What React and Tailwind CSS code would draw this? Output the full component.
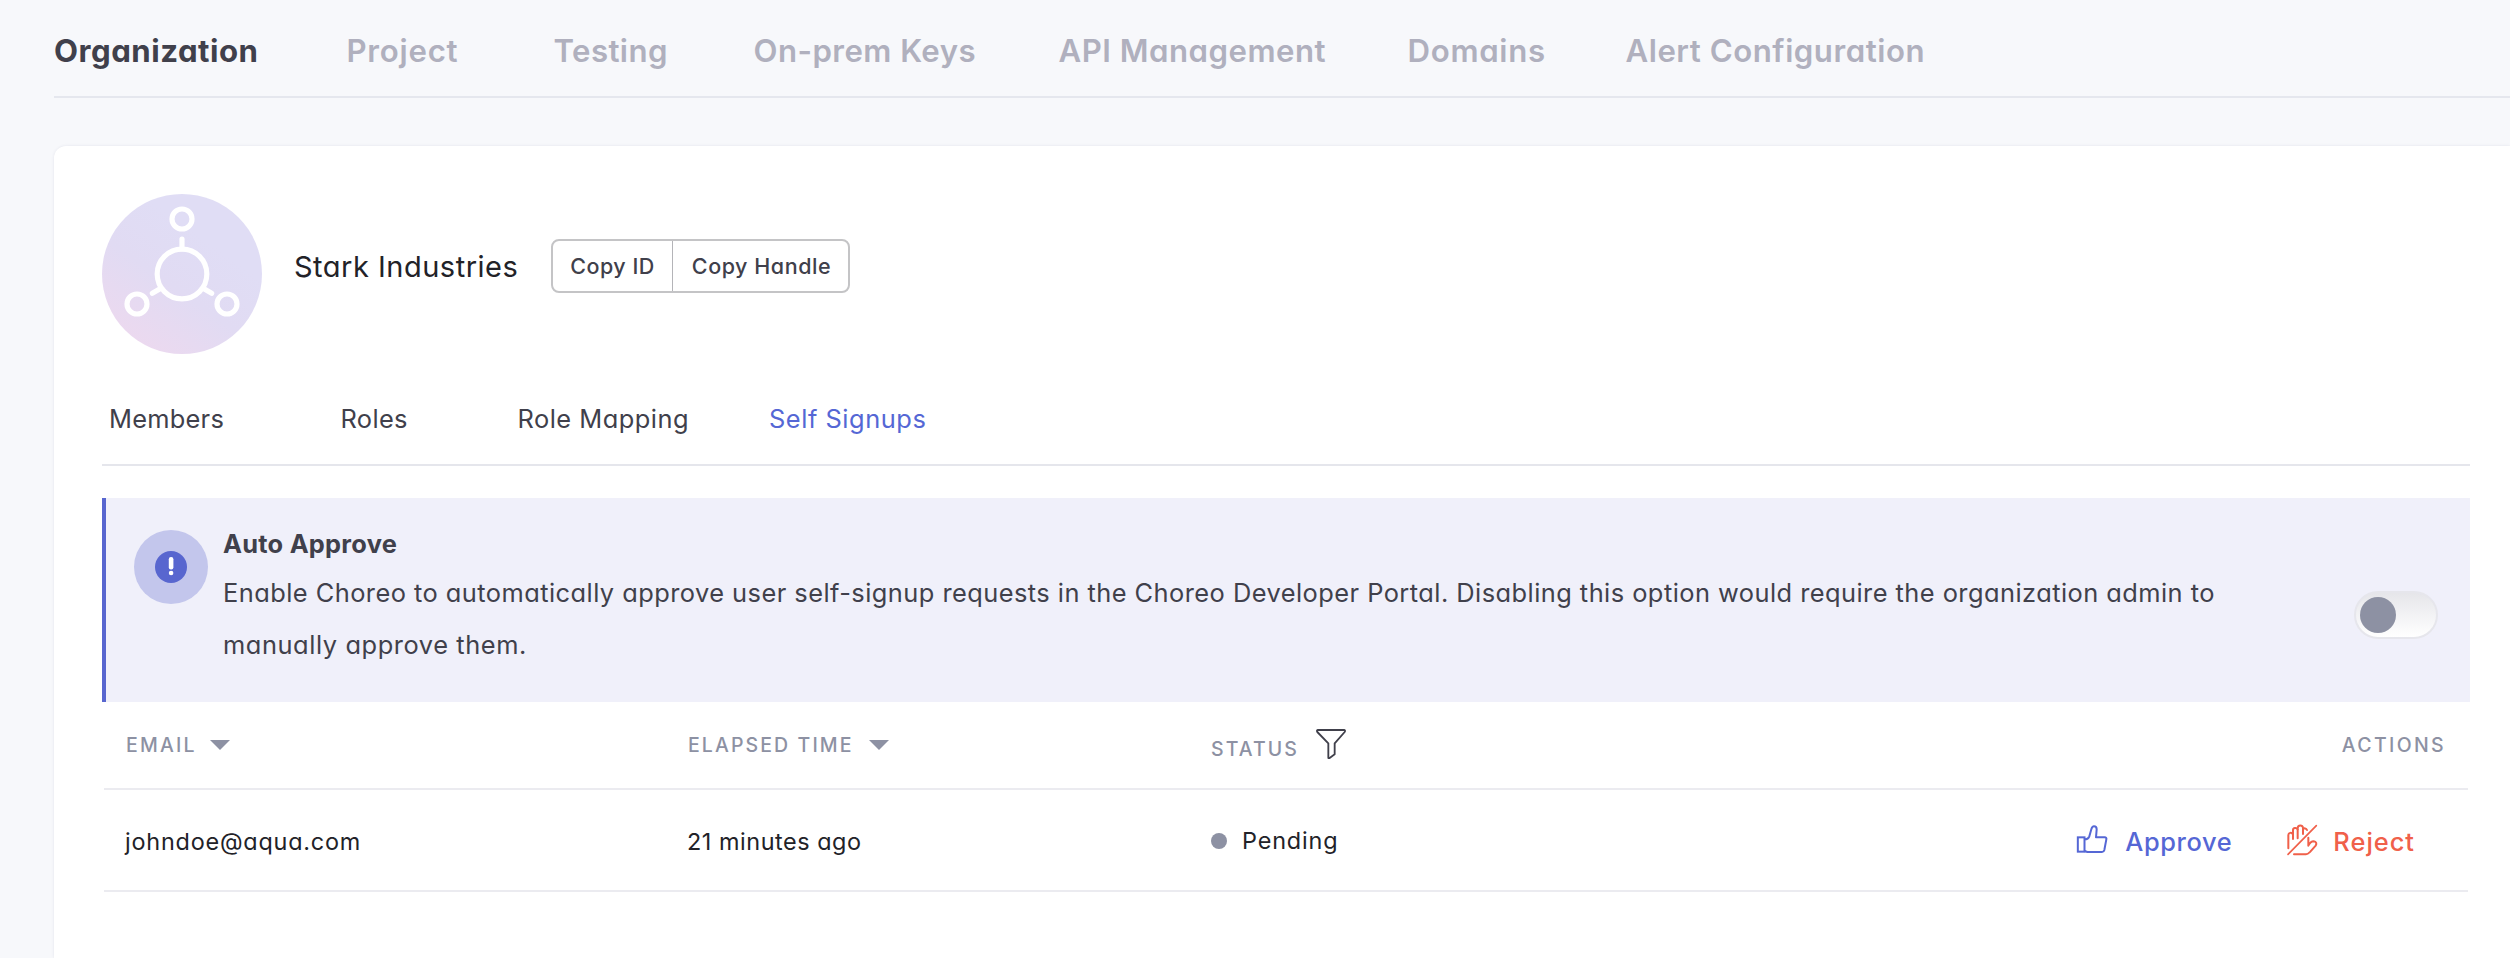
import React from 'react';

const NAV = [
  { label: 'Organization', cls: 'w-[292.5px] font-bold text-[#40404b] tracking-[0.5px]' },
  { label: 'Project', cls: 'w-[207px] font-semibold text-[#b0b0be] tracking-[0.75px]' },
  { label: 'Testing', cls: 'w-[200px] font-semibold text-[#b0b0be] tracking-[0.4px]' },
  { label: 'On-prem Keys', cls: 'w-[305px] font-semibold text-[#b0b0be] tracking-[0.45px]' },
  { label: 'API Management', cls: 'w-[349px] font-semibold text-[#b0b0be] tracking-[0.5px]' },
  { label: 'Domains', cls: 'w-[218px] font-semibold text-[#b0b0be] tracking-[0.7px]' },
  { label: 'Alert Configuration', cls: 'font-semibold text-[#b0b0be] tracking-[0.52px]' },
];

const TABS = [
  { label: 'Members', cls: 'w-[231.5px] text-[#40404b] tracking-[0.25px]' },
  { label: 'Roles', cls: 'w-[177px] text-[#40404b] tracking-[0.35px]' },
  { label: 'Role Mapping', cls: 'w-[251.5px] text-[#40404b] tracking-[0.5px]' },
  { label: 'Self Signups', cls: 'text-[#5567d5] tracking-[0.55px]' },
];

function OrgAvatar() {
  return (
    <svg className="size-40 shrink-0" viewBox="30 30 480 480" fill="none" stroke="#fff" strokeWidth="15.5" strokeLinecap="round">
      <defs>
        <linearGradient id="org" x1="110" y1="470" x2="330" y2="160" gradientUnits="userSpaceOnUse">
          <stop offset="0" stopColor="#ecd9ef" />
          <stop offset="0.55" stopColor="#e1dbf3" />
          <stop offset="1" stopColor="#e0ddf5" />
        </linearGradient>
      </defs>
      <circle cx="270" cy="270" r="240" fill="url(#org)" stroke="none" />
      <circle cx="270" cy="270" r="74.5" />
      <circle cx="270" cy="105" r="30" />
      <circle cx="135" cy="360" r="30" />
      <circle cx="405" cy="360" r="30" />
      <path d="M270 165V194M203 315L181 328M337 315L359 328" />
    </svg>
  );
}

function AlertIcon() {
  return (
    <div className="mt-8 flex size-[74px] shrink-0 items-center justify-center rounded-full bg-[#c3c6ec]">
      <svg className="size-8" viewBox="0 0 32 32">
        <circle cx="16" cy="16" r="16" fill="#5866cf" />
        <rect x="13.8" y="6" width="4.6" height="12.5" rx="2.2" fill="#fff" />
        <circle cx="16.1" cy="22" r="2.3" fill="#fff" />
      </svg>
    </div>
  );
}

function SortArrow() {
  return (
    <svg className="h-2.5 w-5" viewBox="0 0 20 10">
      <path d="M0 0H20L10 10Z" fill="#8d91a3" />
    </svg>
  );
}

function FilterIcon() {
  return (
    <svg className="mb-0.5 size-[30px]" viewBox="0 0 90 90" fill="none" stroke="#40404b" strokeWidth="5.5" strokeLinejoin="round">
      <path d="M6 3H84C87 3 88 6 86 9L56 43V76L40 87.500C38.500 88.500 37 88 37 86V43L4 9C2 6 3 3 6 3Z" />
    </svg>
  );
}

function ThumbUpIcon() {
  return (
    <svg className="size-[50px]" viewBox="0 0 150 150" fill="none" stroke="#5567d5" strokeWidth="6" strokeLinejoin="round">
      <rect x="23.500" y="67" width="20" height="43" strokeLinejoin="miter" />
      <path d="M44 73C52 73 56 70 58 64L64 43C66 36 69 34 72 34C77 34 80 38 80 43L78 67H104C108 67 110 70 109 73L103 105C102 109 99 111 96 111H52L44 108" />
    </svg>
  );
}

function HandOffIcon() {
  return (
    <svg className="size-[50px]" viewBox="0 0 150 150" fill="none" stroke="#f0604a" strokeWidth="6" strokeLinecap="round" strokeLinejoin="round">
      <path d="M37 100V60C37 53 47 51 50 57" />
      <path d="M51 72V45C51 38 62 37 65 43" />
      <path d="M65 70V40C65 29 81 29 81 39V57" />
      <path d="M81 43C84 38 91 40 93 45" />
      <path d="M97 68V92C101 84 106 79 113 79C121 80 123 86 119 92L103 110C99 114 96 118 90 118H54" />
      <path d="M36 118L121 32" strokeWidth="5" />
    </svg>
  );
}

export default function App() {
  return (
    <div className="flex h-[958px] flex-col overflow-hidden bg-[#f7f8fb] pl-[54px] font-['Inter',sans-serif] whitespace-nowrap text-[#222228] [font-feature-settings:'cv11']">
      <nav className="flex h-24 shrink-0 pt-[35px] text-[31.2px] leading-8">
        {NAV.map((n) => (
          <a key={n.label} className={n.cls}>{n.label}</a>
        ))}
      </nav>
      <div className="mb-12 h-0.5 shrink-0 bg-[#e5e7ee]" />

      <main className="flex-1 rounded-tl-xl bg-white pt-12 pr-10 pl-12 shadow-[0_0_3px_rgba(90,90,130,0.12)]">
        <header className="flex items-start">
          <OrgAvatar />
          <h1 className="mt-[53px] ml-8 w-[257px] text-[29px] leading-10 tracking-[0.5px]">Stark Industries</h1>
          <div className="mt-[45px] flex h-[54px] w-[299px] rounded-lg border-2 border-[#c4c4c6] text-[21.500px] font-medium text-[#40404b]">
            <button className="w-[120px] border-r border-[#b4b4b8] tracking-[0.5px]">Copy ID</button>
            <button className="flex-1 pl-0.5 tracking-[0.55px]">Copy Handle</button>
          </div>
        </header>

        <div className="mt-[45px] flex border-b-2 border-[#e5e6ec] pb-[25px] pl-[7px] text-[25.4px] leading-10">
          {TABS.map((t) => (
            <a key={t.label} className={t.cls}>{t.label}</a>
          ))}
        </div>

        <section className="mt-8 flex h-[204px] items-start border-l-4 border-[#5866cf] bg-[#f0f0fa] pr-8 pl-7 text-[#40404b]">
          <AlertIcon />
          <div className="ml-[15px] flex-1 pt-[31px] text-[25.4px]">
            <h2 className="leading-[30px] font-bold tracking-[0.25px]">Auto Approve</h2>
            <p className="mt-2 leading-[52px] tracking-[0.46px]">
              Enable Choreo to automatically approve user self-signup requests in the Choreo Developer Portal. Disabling this option would require the organization admin to
              <br />
              <span className="tracking-[0.58px]">manually approve them.</span>
            </p>
          </div>
          <div className="mt-[93px] flex h-12 w-[84px] items-center rounded-full border-2 border-[#e6e6ec] bg-linear-to-b from-[#e6e6ea] to-white pl-1">
            <span className="size-9 rounded-full bg-[#8d91a3]" />
          </div>
        </section>

        <div className="mr-0.5 ml-0.5">
          <div className="grid h-[88px] grid-cols-[562px_524px_1fr_auto] items-center border-b-2 border-[#ebebf0] pr-[22px] pl-[21px] text-[19.5px] leading-6 font-medium text-[#8d91a3]">
            <div className="flex items-center">
              <span className="w-[85px] pl-px tracking-[2.2px]">EMAIL</span>
              <SortArrow />
            </div>
            <div className="flex items-center">
              <span className="w-[182px] pl-px tracking-[2.1px]">ELAPSED TIME</span>
              <SortArrow />
            </div>
            <div className="flex items-center">
              <span className="w-[105px] pt-[7px] tracking-[2.05px]">STATUS</span>
              <FilterIcon />
            </div>
            <span className="tracking-[2.35px]">ACTIONS</span>
          </div>

          <div className="grid h-[102px] grid-cols-[562px_524px_1fr_auto] items-center border-b-2 border-[#ebebf0] pr-[53px] pl-[21px] text-[23.4px]">
            <span className="pt-[3px] tracking-[0.8px]">johndoe@aqua.com</span>
            <span className="pt-[3px] tracking-[0.55px]">21 minutes ago</span>
            <div className="flex items-center pt-0.5">
              <span className="mr-[15px] size-4 rounded-full bg-[#8d91a3]" />
              <span className="tracking-[0.85px]">Pending</span>
            </div>
            <div className="flex items-center text-[25.4px] font-medium">
              <ThumbUpIcon />
              <span className="ml-[5px] w-[151px] pt-[5px] tracking-[0.6px] text-[#5567d5]">Approve</span>
              <HandOffIcon />
              <span className="ml-[7px] pt-[5px] tracking-[1px] text-[#f0604a]">Reject</span>
            </div>
          </div>
        </div>
      </main>
    </div>
  );
}
